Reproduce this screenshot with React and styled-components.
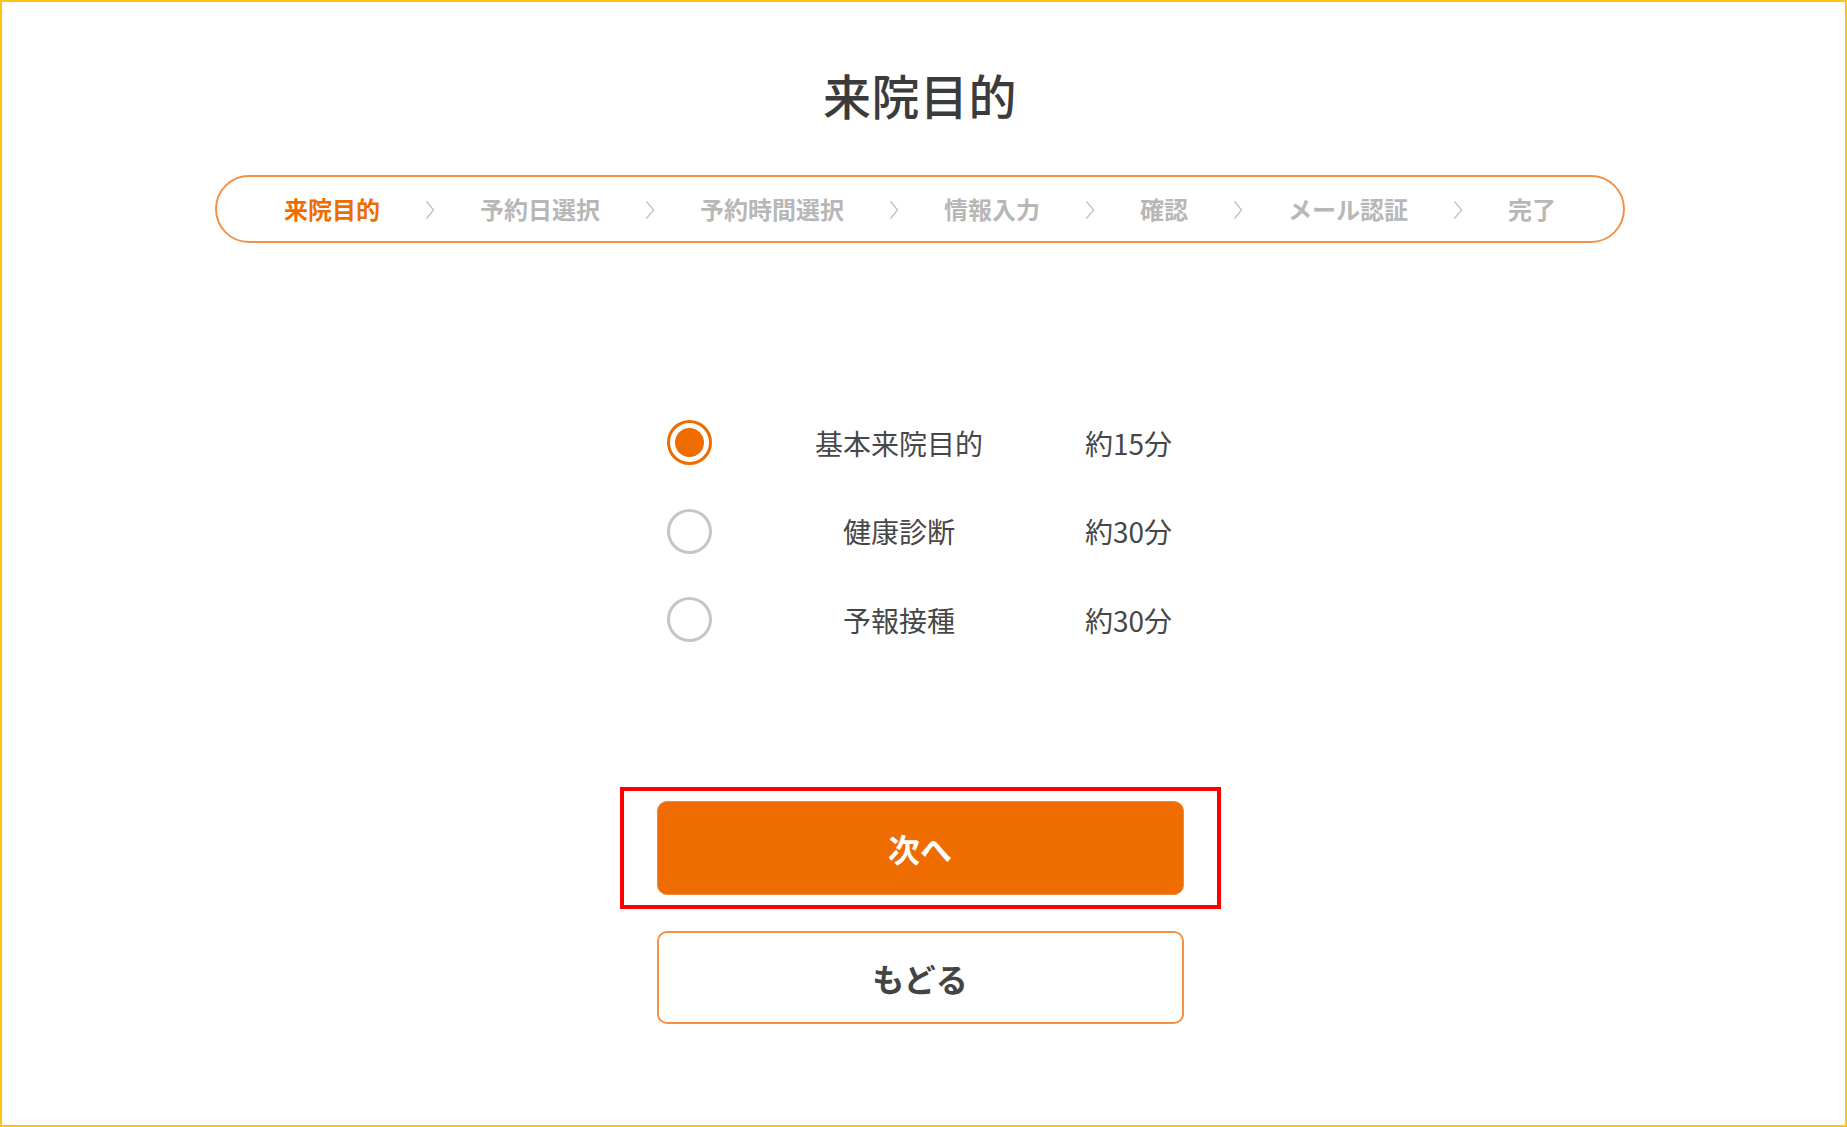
import React, { useState } from 'react'
import styled, { createGlobalStyle } from 'styled-components'

const GlobalStyle = createGlobalStyle`
  html, body {
    margin: 0;
    padding: 0;
    background: #fff;
  }
  body {
    font-family: "Noto Sans CJK JP", "Noto Sans", sans-serif;
  }
  * {
    box-sizing: border-box;
  }
`

const steps = ['来院目的', '予約日選択', '予約時間選択', '情報入力', '確認', 'メール認証', '完了']

const purposes = [
  { id: 'basic', label: '基本来院目的', time: '約15分' },
  { id: 'health', label: '健康診断', time: '約30分' },
  { id: 'vaccine', label: '予報接種', time: '約30分' },
]

const Chevron = () => (
  <svg width="10" height="20" viewBox="0 0 10 20" fill="none">
    <polyline points="1.5,1.5 8.5,10 1.5,18.5" stroke="#c2c2c2" strokeWidth="1.4" strokeLinejoin="round" />
  </svg>
)

const App = () => {
  const [selected, setSelected] = useState('basic')

  return (
    <>
      <GlobalStyle />
      <Frame>
        <Title>来院目的</Title>
        <Stepper>
          {steps.map((step, i) => (
            <React.Fragment key={step}>
              {i > 0 && (
                <Separator>
                  <Chevron />
                </Separator>
              )}
              <Step $active={i === 0}>{step}</Step>
            </React.Fragment>
          ))}
        </Stepper>

        <RadioList>
          {purposes.map((p) => (
            <RadioRow key={p.id} onClick={() => setSelected(p.id)}>
              <Radio $checked={selected === p.id} />
              <Label>{p.label}</Label>
              <Time>{p.time}</Time>
            </RadioRow>
          ))}
        </RadioList>

        <Highlight>
          <PrimaryButton>次へ</PrimaryButton>
        </Highlight>
        <SecondaryButton>もどる</SecondaryButton>
      </Frame>
    </>
  )
}

const Frame = styled.div`
  width: 100vw;
  height: 100vh;
  border: 2px solid #ffc20e;
  padding: 68px 7px 0 0;
  display: flex;
  flex-direction: column;
  align-items: center;
  overflow: hidden;
`
const Title = styled.h1`
  margin: 0;
  font-size: 48px;
  line-height: 1;
  font-weight: 500;
  color: #3b3b3b;
  letter-spacing: 0.5px;
`
const Stepper = styled.div`
  margin-top: 57px;
  width: 1410px;
  height: 68px;
  border: 2px solid #f39149;
  border-radius: 34px;
  display: flex;
  align-items: center;
  justify-content: center;
`
const Step = styled.span`
  font-size: 24px;
  line-height: 1;
  font-weight: 700;
  color: ${(props) => (props.$active ? '#ee6c00' : '#b7b7b7')};
  white-space: nowrap;
`
const Separator = styled.span`
  width: 100px;
  display: flex;
  justify-content: center;
  align-items: center;
  padding-top: 2px;
`
const RadioList = styled.div`
  margin-top: 177px;
  display: flex;
  flex-direction: column;
  gap: 43.5px;
`
const RadioRow = styled.div`
  width: 506px;
  height: 45px;
  display: grid;
  grid-template-columns: 45px 356px 105px;
  align-items: center;
  cursor: pointer;
`
const Radio = styled.span`
  width: 45px;
  height: 45px;
  border-radius: 50%;
  border: 3px solid ${(props) => (props.$checked ? '#ee6c00' : '#c6c6c6')};
  display: flex;
  align-items: center;
  justify-content: center;
  &::after {
    content: '';
    width: 29px;
    height: 29px;
    border-radius: 50%;
    background: #ee6c00;
    display: ${(props) => (props.$checked ? 'block' : 'none')};
  }
`
const Label = styled.span`
  margin-left: 18px;
  text-align: center;
  font-size: 28px;
  line-height: 1;
  color: #474747;
`
const Time = styled.span`
  margin-left: 17px;
  font-size: 28px;
  line-height: 1;
  color: #474747;
  white-space: nowrap;
`
const Highlight = styled.div`
  margin-top: 145px;
  border: 4px solid #ff0000;
  padding: 10px 33px;
`
const BaseButton = styled.button`
  width: 527px;
  height: 94px;
  border-radius: 10px;
  font-family: "Noto Sans CJK JP", "Noto Sans", sans-serif;
  font-size: 32px;
  font-weight: 700;
  display: flex;
  align-items: center;
  justify-content: center;
  cursor: pointer;
  padding: 0;
`
const PrimaryButton = styled(BaseButton)`
  background: #ee6c00;
  border: 1px solid #f08a3c;
  color: #fff;
`
const SecondaryButton = styled(BaseButton)`
  margin-top: 22px;
  height: 93px;
  background: #fff;
  border: 2px solid #f39149;
  color: #444;
`

export default App
